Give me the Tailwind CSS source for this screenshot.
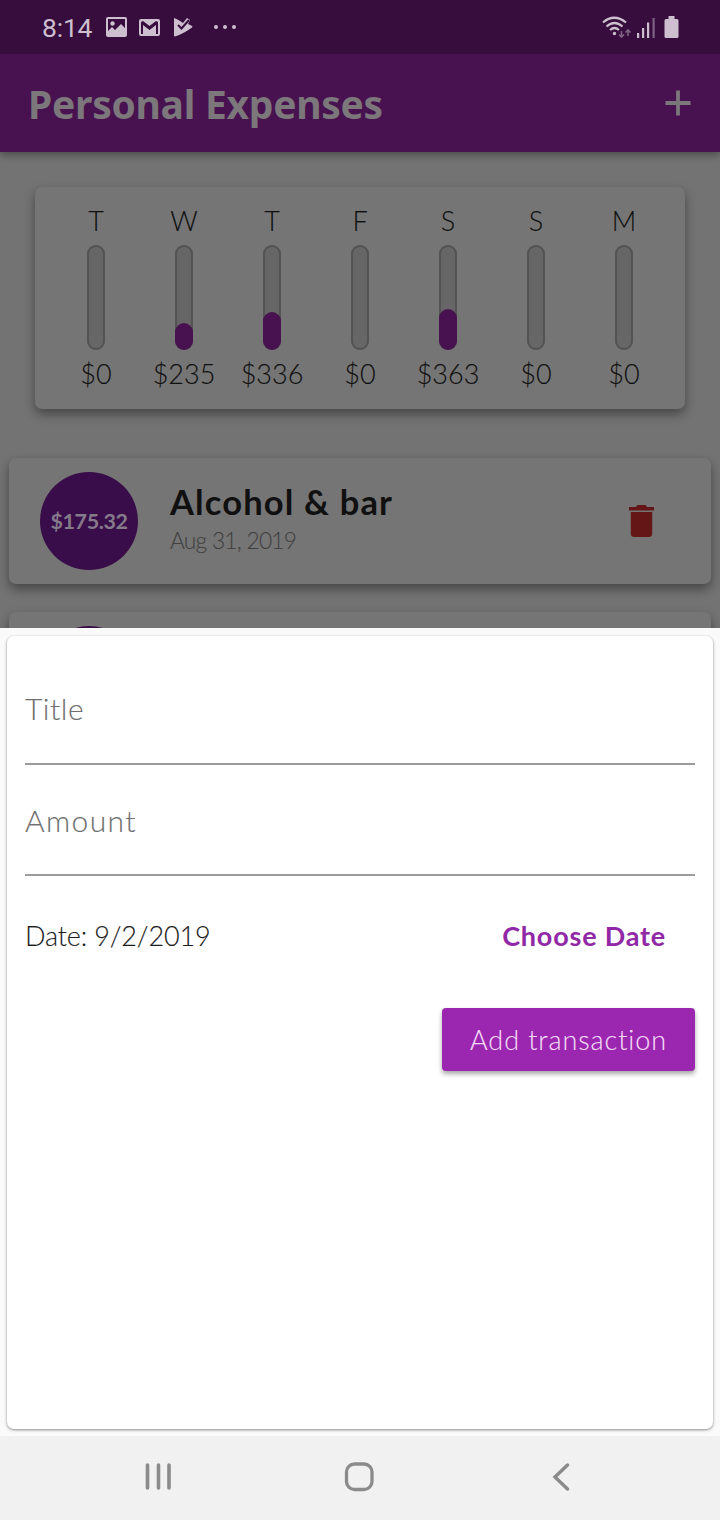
<!DOCTYPE html>
<html lang="en">
<head>
<meta charset="utf-8">
<title>Personal Expenses</title>
<script src="https://cdn.jsdelivr.net/npm/@tailwindcss/browser@4"></script>
</head>
<body class="w-[720px] h-[1520px] overflow-hidden bg-[#fafafa] font-['Lato',sans-serif] font-light">
<div class="flex h-[628px] flex-col overflow-hidden bg-[#737373]">
  <header class="relative shrink-0 shadow-[0_3px_8px_rgba(0,0,0,0.35)]">
    <div class="flex h-[54px] items-center bg-[#370d3d] pl-[42px] pr-[41px] text-[#cdbfcf]">
      <span class="w-[52px] whitespace-nowrap pt-0.5 font-['Roboto',sans-serif] text-[26.5px] font-normal leading-[30px] tracking-[-0.2px]">8:14</span>
      <svg class="ml-3 h-5 w-[21px]" viewBox="0 0 21 20"><rect x="1" y="1" width="19" height="18" rx="1" fill="none" stroke="currentColor" stroke-width="2"/><circle cx="6.500" cy="6.500" r="2.200" fill="currentColor"/><path d="M1 15l5-5 3 3 6-6 5 5v7H1z" fill="currentColor"/></svg>
      <svg class="ml-3 h-[17px] w-[21px]" viewBox="0 0 21 17"><path fill-rule="evenodd" fill="currentColor" d="M2 0h17a2 2 0 0 1 2 2v13a2 2 0 0 1-2 2H2a2 2 0 0 1-2-2V2a2 2 0 0 1 2-2zM2 3v12h2V6l6.500 5L17 6v9h2V3l-2-1-6.500 5L4 2z"/></svg>
      <svg class="ml-[14px] h-5 w-[19px]" viewBox="0 0 19 20"><path fill="currentColor" d="M0 1q3 1 6 3l3 2 4-5 3 2-2 4 4 2q1 .8 0 1.500Q9 17 1 19.500L0 19z"/><path d="M4 8l3.500 3.500L15 3" fill="none" stroke="#370d3d" stroke-width="2"/></svg>
      <svg class="ml-5 h-[6px] w-6" viewBox="0 0 24 6" fill="currentColor"><circle cx="3" cy="3" r="2"/><circle cx="12" cy="3" r="2"/><circle cx="21" cy="3" r="2"/></svg>
      <svg class="ml-auto h-[23px] w-[30px]" viewBox="0 0 30 23" fill="none" stroke="currentColor" stroke-width="2.200"><path d="M1 6.500q11-9.500 23 0M4.500 10.500q8-7 16 0M8 14q4.500-4 9 0"/><circle cx="12.500" cy="17.500" r="1.700" fill="currentColor" stroke="none"/><path stroke="#7e6283" stroke-width="1.600" d="M19.500 15v6M17 18.500l2.500 2.500 2.500-2.500M26 20v-6M23.500 16.500L26 14l2.500 2.500"/></svg>
      <svg class="ml-1 h-[21px] w-5" viewBox="0 0 20 21" fill="currentColor"><rect x="1" y="16" width="2.200" height="5"/><rect x="6" y="11" width="2.200" height="10"/><rect x="11" y="5.500" width="2.200" height="15.500"/><rect x="16.500" y="1" width="2.200" height="20" fill="#7e6283"/></svg>
      <svg class="ml-2 h-[22px] w-[15px]" viewBox="0 0 15 22" fill="currentColor"><path d="M4.500 0h6v3H13q1.500 0 1.500 1.500v16q0 1.500-1.500 1.500H2Q.5 22 .5 20.500v-16Q.5 3 2 3h2.500z"/></svg>
    </div>
    <div class="flex h-[98px] items-center justify-between bg-[#481150] pl-7 pr-[29px] text-[#7b777b]">
      <h1 class="whitespace-nowrap pt-0.5 font-['Noto_Sans',sans-serif] text-[39px] font-bold leading-[48px] tracking-[-0.27px]">Personal Expenses</h1>
      <svg class="h-[26px] w-[26px]" viewBox="0 0 26 26"><path d="M13 .5v25M.5 13h25" stroke="currentColor" stroke-width="3.800"/></svg>
    </div>
  </header>
  <section class="mx-[35px] mt-[35px] grid h-[222px] shrink-0 grid-cols-7 rounded-[7px] bg-[#757575] px-[17px] pt-[18px] text-[27px] leading-8 text-[#101010] shadow-[0_5px_11px_rgba(0,0,0,0.4)] [-webkit-text-stroke:0.12px]" id="chart"></section>
  <section class="mx-[9px] mt-[49px] flex h-[126px] shrink-0 items-center rounded-[7px] bg-[#757575] pl-[31px] pr-[57px] shadow-[0_5px_11px_rgba(0,0,0,0.4)]">
    <div class="flex h-[98px] w-[98px] items-center justify-center rounded-full bg-[#380d49] text-[21.5px] font-bold tracking-[-0.4px] text-[#857a89]">$175.32</div>
    <div class="ml-8 flex flex-col items-start whitespace-nowrap pb-[3px]">
      <h2 class="text-[34.5px] font-bold leading-[42px] tracking-[1.15px] text-[#101010]">Alcohol &amp; bar</h2>
      <p class="text-[22.75px] leading-9 tracking-[-0.75px] text-[#414141] [-webkit-text-stroke:0.1px]">Aug 31, 2019</p>
    </div>
    <svg class="ml-auto h-8 w-[25px]" viewBox="0 0 25 32" fill="#641616"><path d="M0 2h7l1.500-2h8L18 2h7v3.500H0zM1.800 7h21.400v21.500q0 3.500-3.500 3.500H5.300q-3.500 0-3.500-3.500z"/></svg>
  </section>
  <section class="mx-[9px] mt-7 h-[126px] shrink-0 rounded-[7px] bg-[#757575] pl-[31px] pt-[14px] shadow-[0_5px_11px_rgba(0,0,0,0.4)]"><div class="h-[98px] w-[98px] rounded-full bg-[#380d49]"></div></section>
</div>
<main class="h-[808px] bg-[#fafafa] px-[7px] pt-2">
  <form class="flex h-[793px] flex-col rounded-[7px] bg-white px-[18px] shadow-[0_1px_3px_rgba(0,0,0,0.45)]">
    <label class="flex h-[129px] items-start border-b-2 border-[#9b9b9b] pt-[54px] text-[30px] leading-9 tracking-[0.5px] text-[#6f6f6f] [-webkit-text-stroke:0.12px]">Title</label>
    <label class="flex h-[111px] items-start border-b-2 border-[#9b9b9b] pt-[37px] text-[30px] leading-9 tracking-[1.4px] text-[#6f6f6f] [-webkit-text-stroke:0.12px]">Amount</label>
    <div class="flex h-[120px] items-center justify-between pr-[29px] text-[27px] leading-8">
      <span class="tracking-[-0.15px] text-[#1c1c1c] [-webkit-text-stroke:0.12px]">Date: 9/2/2019</span>
      <button type="button" class="font-bold tracking-[0.8px] text-[#9128a6]">Choose Date</button>
    </div>
    <button type="button" class="mt-3 h-[63px] w-[253px] self-end rounded-[4px] bg-[#9b27b0] text-[27px] leading-8 tracking-[0.9px] text-[#f3dcf6] shadow-[0_3px_5px_rgba(0,0,0,0.35)] [-webkit-text-stroke:0.12px]">Add transaction</button>
  </form>
</main>
<nav class="flex h-[84px] items-center bg-[#f1f1f1] pb-[3px] text-[#8b8b8b]">
  <svg class="ml-[145px] h-[27px] w-[27px]" viewBox="0 0 27 27" stroke="currentColor" stroke-width="3.600" stroke-linecap="round"><path d="M2.500 2v23M13.500 2v23M24 2v23"/></svg>
  <svg class="ml-[172px] h-[30px] w-[30px]" viewBox="0 0 30 30" fill="none" stroke="currentColor" stroke-width="3.300"><rect x="2.500" y="2" width="25.500" height="25.500" rx="8"/></svg>
  <svg class="ml-[178px] h-[28px] w-[18px]" viewBox="0 0 18 28" fill="none" stroke="currentColor" stroke-width="3.400" stroke-linecap="round"><path d="M15.500 2L3 14l12.500 12"/></svg>
</nav>
<script>
  const days = [['T', 0, 0], ['W', 235, 27], ['T', 336, 38], ['F', 0, 0], ['S', 363, 41], ['S', 0, 0], ['M', 0, 0]];
  document.getElementById('chart').innerHTML = days.map(([day, spent, height]) => `
    <div class="flex flex-col items-center">
      <span>${day}</span>
      <div class="relative mt-2 flex h-[105px] w-[18px] items-end rounded-full bg-[#666]">
        <i class="absolute inset-0 rounded-full border-2 border-[#535353]"></i>
        <i class="relative block w-full rounded-full bg-[#481150]" style="height:${height}px"></i>
      </div>
      <span class="mt-2">$${spent}</span>
    </div>`).join('');
</script>
</body>
</html>
